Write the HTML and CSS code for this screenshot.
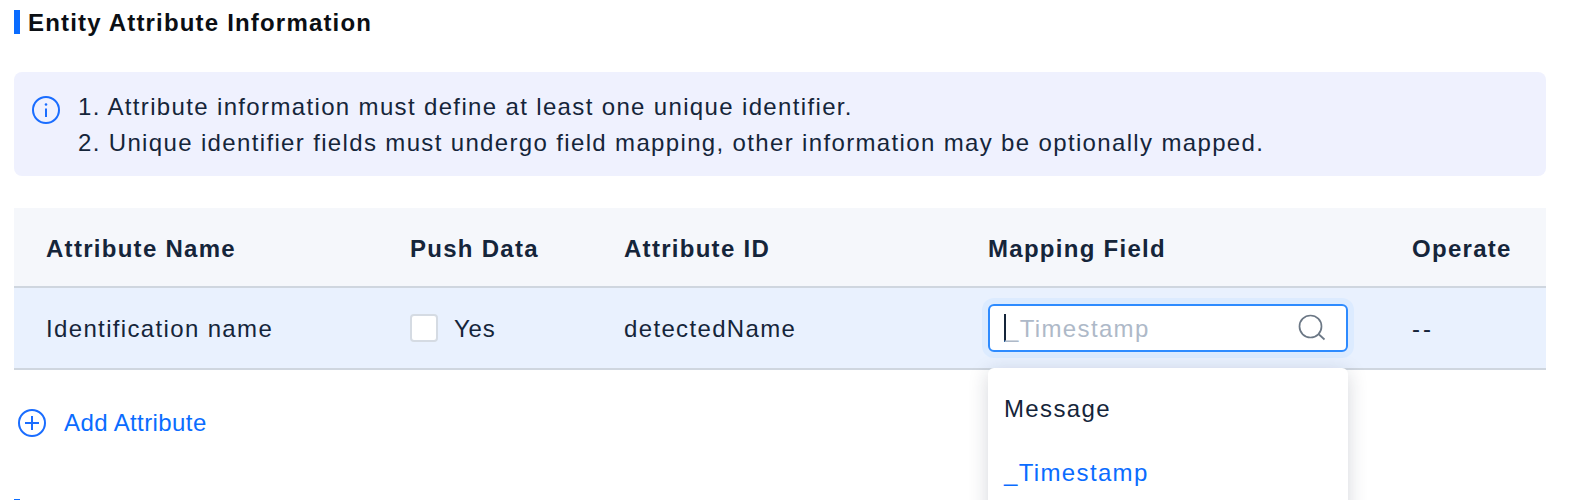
FILE: index.html
```html
<!DOCTYPE html>
<html lang="en">
<head>
<meta charset="utf-8">
<title>Entity Attribute Information</title>
<link rel="stylesheet" href="styles.css">
</head>
<body>
<main class="page">
  <h2 class="section-title">Entity Attribute Information</h2>
  <div class="alert">
    <svg class="alert-icon" viewBox="0 0 28 28" width="28" height="28" fill="none" stroke="#1a6dff" stroke-width="2">
      <circle cx="14" cy="14" r="13"/>
      <path d="M14 12.5V21" stroke-width="2"/>
      <circle cx="14" cy="8.5" r="1.3" fill="#1a6dff" stroke="none"/>
    </svg>
    <ol class="alert-list">
      <li>1. Attribute information must define at least one unique identifier.</li>
      <li>2. Unique identifier fields must undergo field mapping, other information may be optionally mapped.</li>
    </ol>
  </div>
  <div class="table">
    <div class="row head">
      <div class="cell">Attribute Name</div>
      <div class="cell">Push Data</div>
      <div class="cell">Attribute ID</div>
      <div class="cell">Mapping Field</div>
      <div class="cell">Operate</div>
    </div>
    <div class="row body">
      <div class="cell text">Identification name</div>
      <div class="cell check-cell"><span class="checkbox"></span><span class="text yes">Yes</span></div>
      <div class="cell text">detectedName</div>
      <div class="cell select-cell">
        <div class="select">
          <span class="caret"></span>
          <span class="placeholder text">_Timestamp</span>
          <svg class="search-icon" viewBox="0 0 28 28" width="28" height="28" fill="none" stroke="#6b7785" stroke-width="1.7">
            <circle cx="12.5" cy="12.5" r="11"/>
            <path d="M21 20.5l5.5 5"/>
          </svg>
        </div>
        <div class="dropdown">
          <div class="option">Message</div>
          <div class="option active">_Timestamp</div>
        </div>
      </div>
      <div class="cell text dash">--</div>
    </div>
  </div>
  <div class="add">
    <svg viewBox="0 0 28 28" width="28" height="28" fill="none" stroke="#1a6dff" stroke-width="2">
      <circle cx="14" cy="14" r="13"/>
      <path d="M14 7v14M7 14h14"/>
    </svg>
    <span>Add Attribute</span>
  </div>
  <div class="next-mark"></div>
</main>
</body>
</html>
```
FILE: styles.css
```css
* { box-sizing: border-box; }
html, body { margin: 0; height: 100%; overflow: hidden; background: #fff; }
body { font-family: "Liberation Sans", Arial, sans-serif; font-size: 24px; color: #15253a; letter-spacing: 1.35px; }
.page { padding: 10px 24px 0 14px; height: 500px; overflow: hidden; }
.section-title {
  margin: 0;
  height: 24px;
  padding: 2px 0 0 8px;
  line-height: 22px;
  font-size: 24px;
  font-weight: 700;
  color: #0b0f14;
  letter-spacing: 1.18px;
  border-left: 6px solid #0a6cff;
}
.alert {
  display: flex;
  margin-top: 38px;
  height: 104px;
  padding: 17px 18px;
  background: #eff1fe;
  border-radius: 8px;
}
.alert-icon { flex: none; margin-top: 7px; }
.alert-list { list-style: none; margin: 0 0 0 18px; padding: 0; line-height: 36px; }
.table { margin-top: 32px; }
.row { display: grid; grid-template-columns: 364px 214px 364px 424px 1fr; align-items: center; padding-left: 32px; }
.head { height: 80px; background: #f5f7fb; border-bottom: 2px solid #cfd6df; font-weight: 700; padding-top: 4px; letter-spacing: 1.28px; }
.body { height: 82px; background: #e9f1fe; border-bottom: 2px solid #cfd6df; }
.text { padding-top: 2px; }
.yes { letter-spacing: .8px; }
.dash { letter-spacing: 3px; }
.check-cell { display: flex; align-items: center; gap: 16px; }
.checkbox { width: 28px; height: 28px; background: #fff; border: 2px solid #d5dbe3; border-radius: 4px; }
.select-cell { position: relative; }
.select {
  display: flex;
  align-items: center;
  width: 360px;
  height: 48px;
  padding: 0 16px 0 14px;
  background: #fff;
  border: 2px solid #2e8bff;
  border-radius: 6px;
  box-shadow: 0 0 0 6px #dcebff;
}
.caret { width: 2px; height: 28px; background: #15253a; flex: none; }
.placeholder { color: #aeb9c8; margin-left: -1px; flex: 1; }
.search-icon { flex: none; margin-right: 4px; }
.dropdown {
  position: absolute;
  top: 64px;
  left: 0;
  width: 360px;
  height: 200px;
  padding-top: 9px;
  background: #fff;
  border-radius: 6px;
  box-shadow: 0 4px 20px rgba(20, 35, 60, .18);
}
.option { height: 64px; line-height: 64px; padding-left: 16px; }
.option.active { color: #0a6cff; }
.add { display: flex; align-items: center; gap: 18px; margin-top: 39px; margin-left: 4px; color: #0a6cff; letter-spacing: .4px; }
.next-mark { margin-top: 62px; width: 6px; height: 24px; background: #0a6cff; }
```
